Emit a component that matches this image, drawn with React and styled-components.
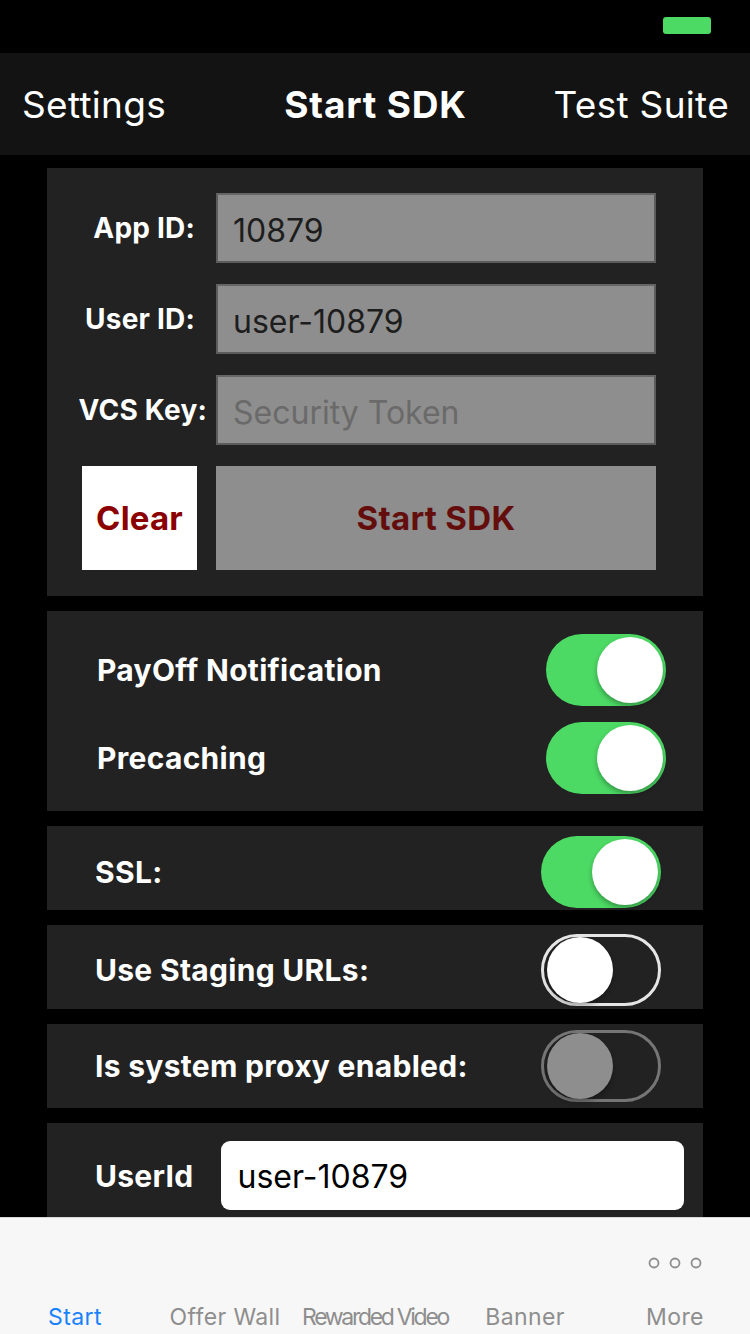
import styled, { createGlobalStyle } from 'styled-components';

const GlobalStyle = createGlobalStyle`
  html, body {
    margin: 0;
    padding: 0;
    background: #000;
  }
  * {
    box-sizing: border-box;
  }
`;

const FONT = `Inter, Roboto, "Liberation Sans", sans-serif`;

const toggles = [
  { label: 'PayOff Notification', on: true },
  { label: 'Precaching', on: true },
];

const tabs = [
  { label: 'Start', active: true },
  { label: 'Offer Wall' },
  { label: 'Rewarded Video', tight: true },
  { label: 'Banner' },
  { label: 'More', more: true },
];

const Toggle = ({ on, disabled }) => (
  <Track $on={on} $disabled={disabled}>
    <Knob $disabled={disabled} />
  </Track>
);

const App = () => {
  return (
    <Screen>
      <GlobalStyle />
      <StatusBar>
        <Battery />
      </StatusBar>
      <NavBar>
        <NavItem $align="start">Settings</NavItem>
        <NavItem $bold>Start SDK</NavItem>
        <NavItem $align="end">Test Suite</NavItem>
      </NavBar>

      <Content>
        <Card $padding="25px 47px 26px 25px" $gap="21px">
          <FieldRow>
            <FieldLabel $inset="12px">App ID:</FieldLabel>
            <FieldInput defaultValue="10879" />
          </FieldRow>
          <FieldRow>
            <FieldLabel $inset="12px">User ID:</FieldLabel>
            <FieldInput defaultValue="user-10879" />
          </FieldRow>
          <FieldRow>
            <FieldLabel>VCS Key:</FieldLabel>
            <FieldInput placeholder="Security Token" />
          </FieldRow>
          <ButtonRow>
            <ClearButton>Clear</ClearButton>
            <StartButton>Start SDK</StartButton>
          </ButtonRow>
        </Card>

        <Card $padding="23px 37px 17px 50px" $gap="16px">
          {toggles.map(t => (
            <SwitchRow key={t.label}>
              <SwitchLabel>{t.label}</SwitchLabel>
              <Toggle on={t.on} />
            </SwitchRow>
          ))}
        </Card>

        <Card $padding="10px 42px 2px 48px">
          <SwitchRow>
            <SwitchLabel>SSL:</SwitchLabel>
            <Toggle on />
          </SwitchRow>
        </Card>

        <Card $padding="9px 42px 3px 48px">
          <SwitchRow>
            <SwitchLabel>Use Staging URLs:</SwitchLabel>
            <Toggle />
          </SwitchRow>
        </Card>

        <Card $padding="6px 42px 6px 48px">
          <SwitchRow>
            <SwitchLabel>Is system proxy enabled:</SwitchLabel>
            <Toggle disabled />
          </SwitchRow>
        </Card>

        <Card $padding="18px 19px 20px 48px">
          <UserRow>
            <SwitchLabel>UserId</SwitchLabel>
            <UserInput defaultValue="user-10879" />
          </UserRow>
        </Card>
      </Content>

      <TabBar>
        {tabs.map(tab => (
          <Tab key={tab.label}>
            <TabIcon>
              {tab.more && (
                <svg width="56" height="14" viewBox="0 0 56 14">
                  <circle cx="7" cy="7" r="4.5" fill="none" stroke="#8e8e8e" strokeWidth="1.8" />
                  <circle cx="28" cy="7" r="4.5" fill="none" stroke="#8e8e8e" strokeWidth="1.8" />
                  <circle cx="49" cy="7" r="4.5" fill="none" stroke="#8e8e8e" strokeWidth="1.8" />
                </svg>
              )}
            </TabIcon>
            <TabLabel $active={tab.active} $tight={tab.tight}>
              {tab.label}
            </TabLabel>
          </Tab>
        ))}
      </TabBar>
    </Screen>
  );
};

const Screen = styled.div`
  display: flex;
  flex-direction: column;
  width: 750px;
  height: 1334px;
  background: #000;
  overflow: hidden;
  font-family: ${FONT};
`;

const StatusBar = styled.div`
  display: flex;
  justify-content: flex-end;
  align-items: flex-start;
  height: 53px;
  padding: 17px 39px 0 0;
  flex-shrink: 0;
`;

const Battery = styled.div`
  width: 48px;
  height: 17px;
  border-radius: 3px;
  background: #4cd964;
`;

const NavBar = styled.div`
  display: grid;
  grid-template-columns: 1fr auto 1fr;
  align-items: center;
  height: 102px;
  padding: 0 21px 0 22px;
  background: #131313;
  flex-shrink: 0;
`;

const NavItem = styled.div`
  justify-self: ${props => props.$align || 'center'};
  color: #fff;
  font-size: 37px;
  font-weight: ${props => (props.$bold ? 700 : 400)};
  letter-spacing: ${props => (props.$bold ? '0.8px' : '0.3px')};
  white-space: nowrap;
`;

const Content = styled.div`
  flex: 1;
  display: flex;
  flex-direction: column;
  gap: 15px;
  padding: 13px 47px 0;
  overflow: hidden;
`;

const Card = styled.div`
  display: flex;
  flex-direction: column;
  gap: ${props => props.$gap || '0'};
  padding: ${props => props.$padding};
  background: #222222;
  flex-shrink: 0;
`;

const FieldRow = styled.div`
  display: flex;
  align-items: center;
  height: 70px;
`;

const FieldLabel = styled.label`
  flex-shrink: 0;
  width: 135px;
  padding-right: ${props => props.$inset || '0'};
  margin-right: 9px;
  text-align: right;
  color: #fff;
  font-size: 28px;
  font-weight: 700;
  letter-spacing: 0.2px;
  white-space: nowrap;
`;

const FieldInput = styled.input`
  flex: 1;
  min-width: 0;
  height: 70px;
  padding: 4px 15px 0;
  background: #8e8e8e;
  border: 2px solid #5c5c5c;
  border-top-color: #666;
  border-radius: 0;
  color: #1d1d1d;
  font-family: ${FONT};
  font-size: 32px;
  outline: none;

  &::placeholder {
    color: #6a6a6a;
  }
`;

const ButtonRow = styled.div`
  display: flex;
  gap: 19px;
  height: 104px;
  padding-left: 10px;
`;

const ClearButton = styled.button`
  flex-shrink: 0;
  width: 115px;
  border: none;
  background: #fff;
  color: #8b0000;
  font-family: ${FONT};
  font-size: 33px;
  font-weight: 700;
  letter-spacing: 0.2px;
  padding: 0;
`;

const StartButton = styled.button`
  flex: 1;
  border: none;
  background: #8e8e8e;
  color: #640d0d;
  font-family: ${FONT};
  font-size: 33px;
  font-weight: 700;
  letter-spacing: 0.3px;
  padding: 0;
`;

const SwitchRow = styled.div`
  display: flex;
  justify-content: space-between;
  align-items: center;
  height: 72px;
`;

const SwitchLabel = styled.span`
  flex-shrink: 0;
  color: #fff;
  font-size: 30px;
  font-weight: 700;
  letter-spacing: 0.3px;
  white-space: nowrap;
`;

const Track = styled.div`
  display: flex;
  align-items: center;
  justify-content: ${props => (props.$on ? 'flex-end' : 'flex-start')};
  width: 120px;
  height: 72px;
  padding: 3px;
  border-radius: 36px;
  background: ${props => (props.$on ? '#4cd964' : 'transparent')};
  border: ${props =>
    props.$on ? 'none' : `3px solid ${props.$disabled ? '#757575' : '#e6e6e6'}`};
`;

const Knob = styled.div`
  width: 66px;
  height: 66px;
  border-radius: 50%;
  background: ${props => (props.$disabled ? '#8e8e8e' : '#fff')};
  box-shadow: 0 3px 5px rgba(0, 0, 0, 0.3);
`;

const UserRow = styled.div`
  display: flex;
  align-items: center;
  gap: 28px;
  height: 69px;
`;

const UserInput = styled.input`
  flex: 1;
  min-width: 0;
  height: 69px;
  padding: 2px 16px 0;
  border: none;
  border-radius: 9px;
  background: #fff;
  color: #000;
  font-family: ${FONT};
  font-size: 32px;
  outline: none;
`;

const TabBar = styled.div`
  display: grid;
  grid-template-columns: repeat(5, 1fr);
  height: 117px;
  background: #f7f7f7;
  border-top: 1px solid #d8d8d8;
  flex-shrink: 0;
`;

const Tab = styled.div`
  display: flex;
  flex-direction: column;
  align-items: center;
  padding-top: 38px;
`;

const TabIcon = styled.div`
  display: flex;
  align-items: center;
  height: 14px;
`;

const TabLabel = styled.span`
  margin-top: 33px;
  color: ${props => (props.$active ? '#1a82fb' : '#8e8e8e')};
  font-size: 23px;
  letter-spacing: ${props => (props.$tight ? '-2.3px' : '0.4px')};
  white-space: nowrap;
`;

export default App;
